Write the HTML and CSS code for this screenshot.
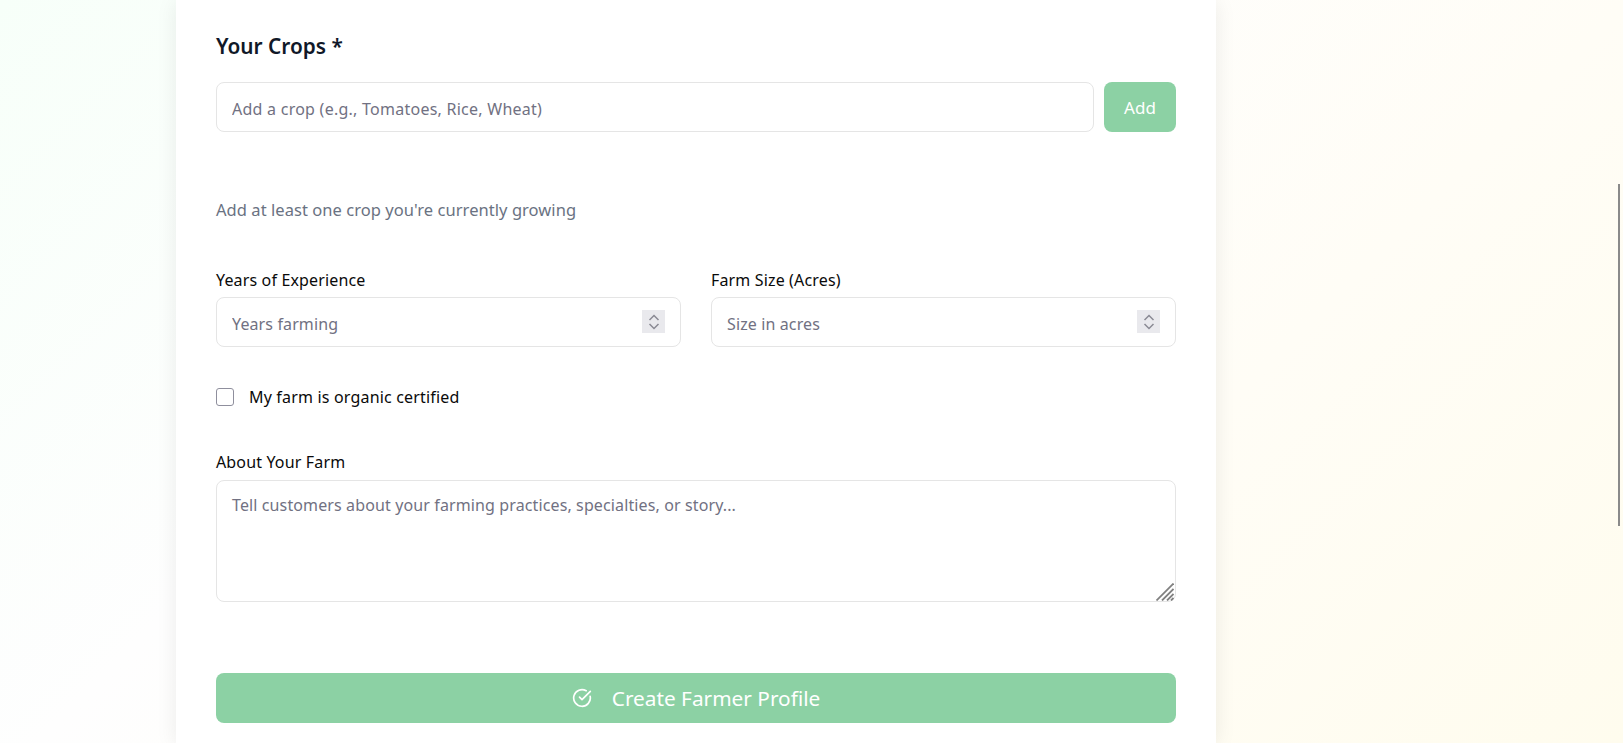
FILE: index.html
```html
<!DOCTYPE html>
<html lang="en">
<head>
  <meta charset="UTF-8">
  <title>Create Farmer Profile</title>
  <link rel="stylesheet" href="styles.css">
</head>
<body>
  <main class="card">
    <form class="form">
      <section class="crops">
        <h2 class="section-title">Your Crops *</h2>
        <div class="crop-row">
          <input class="field crop-field" type="text" placeholder="Add a crop (e.g., Tomatoes, Rice, Wheat)">
          <button class="add-btn" type="button">Add</button>
        </div>
        <p class="hint">Add at least one crop you're currently growing</p>
      </section>

      <div class="two-col">
        <div class="group">
          <label class="label">Years of Experience</label>
          <div class="number-wrap">
            <input class="field" type="text" placeholder="Years farming">
            <span class="spinner">
              <svg width="12" height="18" viewBox="0 0 12 18" fill="none" stroke="#8a8a94" stroke-width="1.5"><path d="M1.5 7 6 2.5 10.5 7"/><path d="M1.5 11 6 15.5 10.5 11"/></svg>
            </span>
          </div>
        </div>
        <div class="group">
          <label class="label">Farm Size (Acres)</label>
          <div class="number-wrap">
            <input class="field" type="text" placeholder="Size in acres">
            <span class="spinner">
              <svg width="12" height="18" viewBox="0 0 12 18" fill="none" stroke="#8a8a94" stroke-width="1.5"><path d="M1.5 7 6 2.5 10.5 7"/><path d="M1.5 11 6 15.5 10.5 11"/></svg>
            </span>
          </div>
        </div>
      </div>

      <label class="check-row">
        <input class="check" type="checkbox">
        <span>My farm is organic certified</span>
      </label>

      <div class="group about">
        <label class="label">About Your Farm</label>
        <div class="area-wrap">
          <textarea class="field area" placeholder="Tell customers about your farming practices, specialties, or story..."></textarea>
          <svg class="grip" width="18" height="18" viewBox="0 0 18 18" stroke="#808080" stroke-width="1.8"><path d="M0.5 17.5 17.5 0.5"/><path d="M6 17.5 17.5 6"/><path d="M11 17.5 17.5 11"/><path d="M15 17.5 17.5 15"/></svg>
        </div>
      </div>

      <button class="submit" type="button">
        <svg width="20" height="20" viewBox="0 0 24 24" fill="none" stroke="currentColor" stroke-width="2" stroke-linecap="round" stroke-linejoin="round"><path d="M21.8 10A10 10 0 1 1 17 3.3"/><path d="m9 11 3 3L22 4"/></svg>
        <span>Create Farmer Profile</span>
      </button>
    </form>
  </main>
  <div class="scroll-thumb"></div>
</body>
</html>
```

FILE: styles.css
```css
* {
  box-sizing: border-box;
}
html,
body {
  margin: 0;
  height: 743px;
  overflow: hidden;
}
body {
  font-family: "Noto Sans", "Open Sans", sans-serif;
  color: #0a0a0a;
  background: linear-gradient(135deg, #f7fff9 0%, #fefefe 33%, #fffdf6 69%, #fffcee 100%);
}
.card {
  width: 1040px;
  height: 743px;
  margin-left: 176px;
  padding: 0 40px;
  background: #fff;
  box-shadow: 0 2px 20px rgba(0, 0, 0, 0.08);
}
.form {
  display: flex;
  flex-direction: column;
}
.section-title {
  margin: 0;
  padding-top: 32px;
  font-size: 20.8px;
  line-height: 28px;
  font-weight: 600;
  color: #101828;
}
.crop-row {
  display: flex;
  gap: 10px;
  margin-top: 22px;
}
.field {
  display: block;
  width: 100%;
  height: 50px;
  padding: 3px 15px 0;
  font: inherit;
  font-size: 16px;
  letter-spacing: 0.12px;
  color: #0a0a0a;
  background: #fff;
  border: 1px solid #e5e5e5;
  border-radius: 8px;
  outline: none;
}
.crop-field {
  letter-spacing: 0.25px;
}
.field::placeholder {
  color: #717182;
  opacity: 1;
}
.add-btn {
  flex: 0 0 72px;
  height: 50px;
  padding: 0;
  font: inherit;
  font-size: 17px;
  color: #fff;
  background: #8cd1a4;
  border: 0;
  border-radius: 8px;
}
.hint {
  margin: 66px 0 0;
  font-size: 16.5px;
  line-height: 24px;
  letter-spacing: 0.05px;
  color: #6a7282;
}
.two-col {
  display: grid;
  grid-template-columns: 1fr 1fr;
  gap: 30px;
  margin-top: 46px;
}
.label {
  display: block;
  font-size: 16px;
  line-height: 24px;
  letter-spacing: 0.15px;
  margin-bottom: 5px;
}
.number-wrap,
.area-wrap {
  position: relative;
}
.spinner {
  position: absolute;
  top: 13px;
  right: 16px;
  width: 23px;
  height: 23px;
  display: flex;
  align-items: center;
  justify-content: center;
  background: #e9e9ed;
}
.check-row {
  display: flex;
  align-items: center;
  gap: 15px;
  margin-top: 38px;
  font-size: 16px;
  line-height: 24px;
  letter-spacing: 0.18px;
}
.check {
  width: 18px;
  height: 18px;
  margin: 0;
  appearance: none;
  background: #fff;
  border: 1px solid #8f8f9d;
  border-radius: 3px;
}
.about {
  margin-top: 41px;
}
.about .label {
  margin-bottom: 6px;
}
.area {
  height: 122px;
  padding: 13px 15px;
  resize: none;
}
.grip {
  position: absolute;
  right: 2px;
  bottom: 1px;
}
.submit {
  display: flex;
  align-items: center;
  justify-content: center;
  gap: 20px;
  width: 100%;
  height: 50px;
  margin-top: 71px;
  font: inherit;
  font-size: 20.8px;
  color: #fff;
  background: #8cd1a4;
  border: 0;
  border-radius: 8px;
}
.scroll-thumb {
  position: absolute;
  top: 184px;
  right: 3px;
  width: 2px;
  height: 342px;
  background: #8a8a8a;
}
```
